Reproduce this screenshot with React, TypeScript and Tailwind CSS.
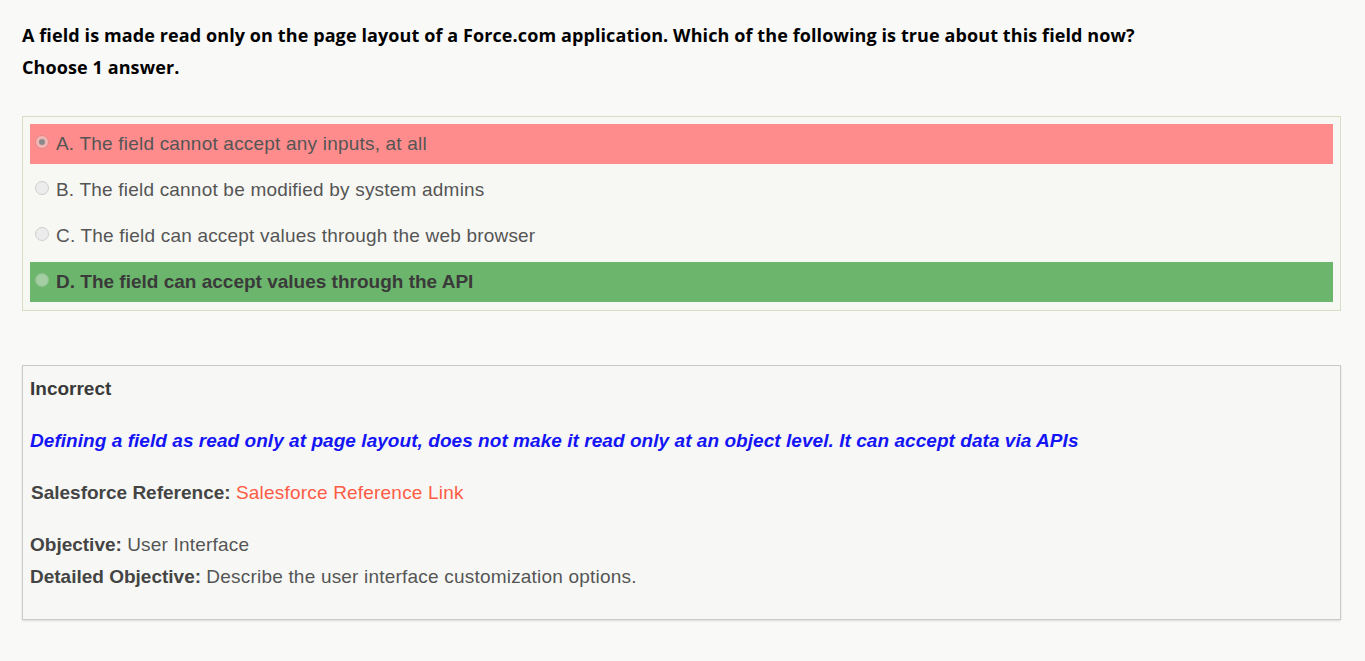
const options = [
  { label: "A. The field cannot accept any inputs, at all", state: "wrong", checked: true },
  { label: "B. The field cannot be modified by system admins", state: "none", checked: false },
  { label: "C. The field can accept values through the web browser", state: "none", checked: false },
  { label: "D. The field can accept values through the API", state: "right", checked: false },
]

function Radio({ checked, tint }: { checked: boolean; tint: string }) {
  return (
    <span
      className={`mr-[7px] flex h-[14px] w-[14px] shrink-0 -translate-y-[2px] items-center justify-center rounded-full border ${tint}`}
    >
      {checked && <span className="h-[6px] w-[6px] rounded-full bg-[#8a8a8a]" />}
    </span>
  )
}

export default function App() {
  return (
    <div className="min-h-screen bg-[#f9f9f8] pl-[22px] pr-[24px] pt-[19px] font-['Liberation_Sans',Arial,sans-serif]">
      <div className="font-['Open_Sans',sans-serif] text-[18px] font-bold leading-[32px] tracking-[0.1px] text-black">
        <p>A field is made read only on the page layout of a Force.com application. Which of the following is true about this field now?</p>
        <p>Choose 1 answer.</p>
      </div>

      {/* answer options */}
      <div className="mt-[33px] flex flex-col gap-[6px] border border-[#d5dfc3] bg-[#f7f8f4] px-[7px] pb-[8px] pt-[7px]">
        {options.map((o) => {
          const bg =
            o.state === "wrong" ? "bg-[#ff8c8c]" : o.state === "right" ? "bg-[#6cb56c]" : ""
          const tint =
            o.state === "wrong"
              ? "border-[#e08a8a] bg-[#f3b4b4]"
              : o.state === "right"
                ? "border-[#8fc08f] bg-[#a3cda3]"
                : "border-[#cfcfcf] bg-[#ececec]"
          return (
            <div key={o.label} className={`flex h-[40px] items-center pl-[5px] ${bg}`}>
              <Radio checked={o.checked} tint={tint} />
              <span
                className={`text-[19px] ${o.state === "right" ? "font-bold text-[#3a3a3a]" : "tracking-[0.2px] text-[#555]"}`}
              >
                {o.label}
              </span>
            </div>
          )
        })}
      </div>

      {/* explanation */}
      <div className="mt-[54px] h-[255px] border border-[#cacaca] bg-[#f7f8f5] px-[7px] pt-[12px] text-[19px] leading-[22px] tracking-[0.2px] text-[#555] shadow-[0_1px_2px_rgba(0,0,0,0.12)]">
        <p className="font-bold tracking-normal text-[#3a3a3a]">Incorrect</p>
        <p className="mt-[30px] font-bold italic tracking-[0.05px] text-[#1414f5]">
          Defining a field as read only at page layout, does not make it read only at an object level. It can accept data via APIs
        </p>
        <p className="mt-[30px] pl-px">
          <span className="font-bold tracking-normal text-[#444]">Salesforce Reference: </span>
          <span className="text-[#ff5b45]">Salesforce Reference Link</span>
        </p>
        <p className="mt-[30px]">
          <span className="font-bold tracking-normal text-[#444]">Objective: </span>User Interface
        </p>
        <p className="mt-[10px]">
          <span className="font-bold tracking-normal text-[#444]">Detailed Objective: </span>Describe the user interface customization options.
        </p>
      </div>
    </div>
  )
}
